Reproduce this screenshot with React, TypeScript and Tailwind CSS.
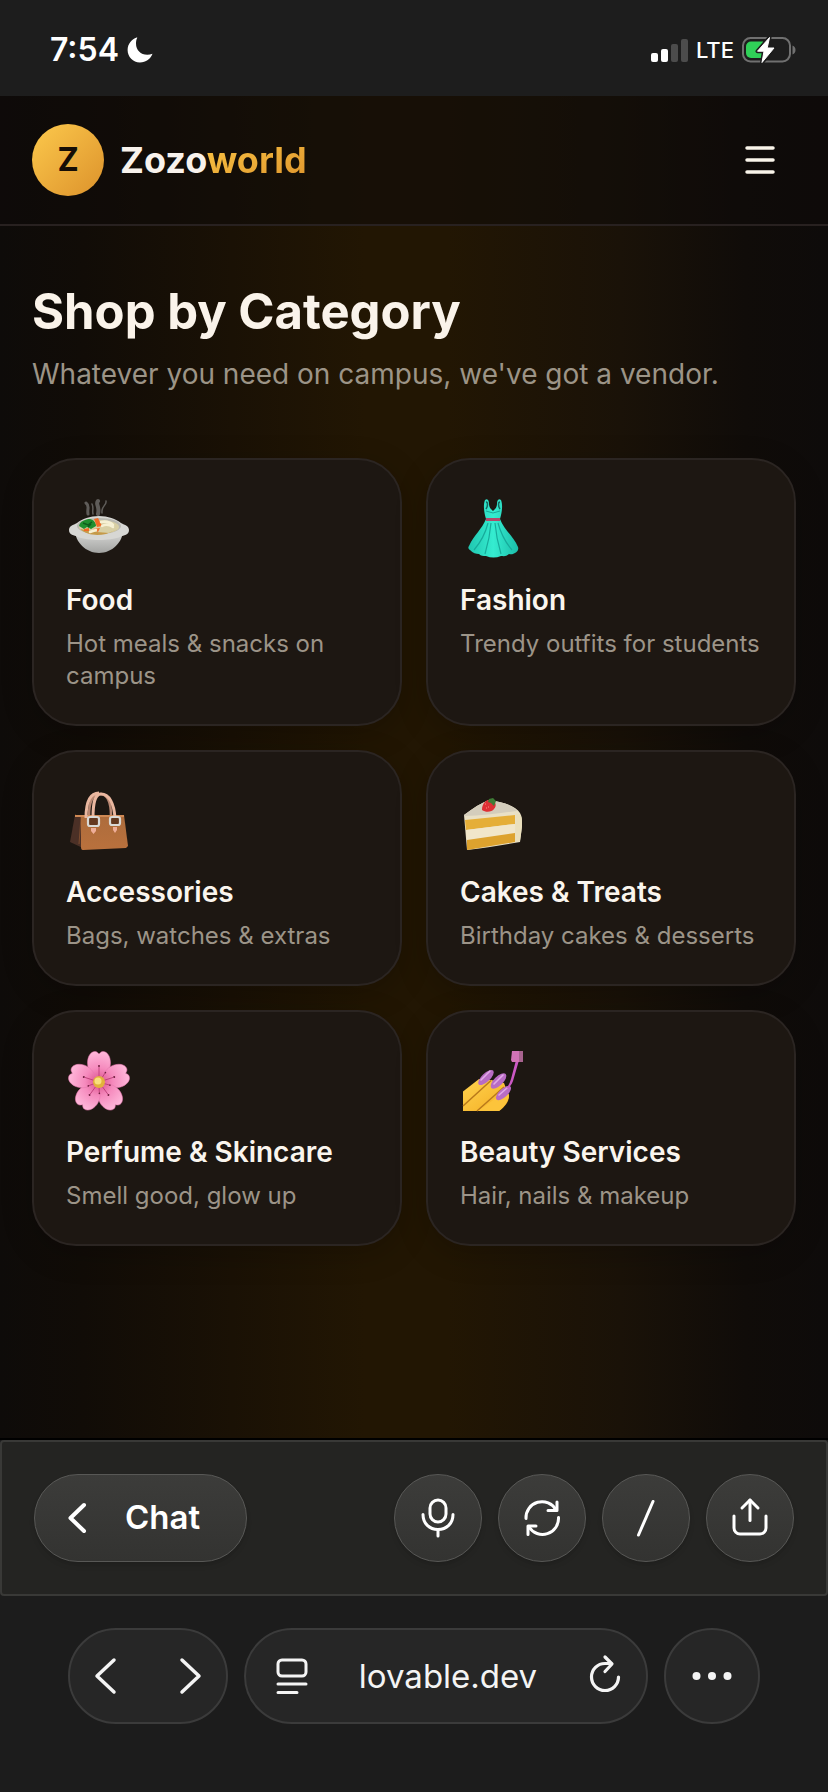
import React from 'react';

const StatusBar = () => (
    <div className="flex items-center justify-between h-24 pl-[50px] pr-8 pt-1 bg-[#1d1d1d] text-white">
        <div className="flex items-center gap-2">
            <span className="text-[32px] leading-10 font-semibold">7:54</span>
            <svg className="w-[26px] h-[26px]" viewBox="0 0 26 26" fill="#fff" aria-hidden="true">
                <path d="M9.6 0.6C5 2.2 0.6 6.8 0.6 13c0 6.800 5.400 12.400 12.300 12.400 6 0 10.800-3.400 12.600-8.600-1.700 0.700-3.400 1-5.200 1C13.600 17.800 9 13.200 9 6.600c0-2 0.200-3.900 1.200-5.700 0.200-0.400-0.200-0.500-0.600-0.300z" />
            </svg>
        </div>
        <div className="flex items-center gap-2">
            <svg className="w-[37px] h-[25px]" viewBox="0 0 37 25" aria-hidden="true">
                <rect x="0" y="15" width="7" height="9" rx="2" fill="#fff" />
                <rect x="10" y="11" width="7" height="13" rx="2" fill="#fff" />
                <rect x="20" y="6" width="7" height="18" rx="2" fill="#4c4c4c" />
                <rect x="30" y="1" width="7" height="23" rx="2" fill="#4c4c4c" />
            </svg>
            <span className="text-[22px] leading-8 font-medium">LTE</span>
            <svg className="w-[54px] h-[26px]" viewBox="0 0 54 26" aria-hidden="true">
                <rect x="1" y="1" width="47" height="23.500" rx="7.500" fill="none" stroke="#707070" strokeWidth="2" />
                <path d="M50.500 8.500c4 1.500 4 7.500 0 9z" fill="#707070" />
                <path d="M9 4.500h12v16.500H9a5 5 0 0 1-5-5v-6.500a5 5 0 0 1 5-5z" fill="#30d158" />
                <path d="M27.500 0.500 15.500 14.200h6.500L20 25.500 32 11h-6.800z" fill="#fff" stroke="#1d1d1d" strokeWidth="4" strokeLinejoin="round" />
                <path d="M27.500 0.500 15.500 14.200h6.500L20 25.500 32 11h-6.800z" fill="#fff" stroke="#fff" strokeWidth="1" strokeLinejoin="round" />
            </svg>
        </div>
    </div>
);

const FoodArt = () => (
    <>
        <defs>
            <linearGradient id="bowl" x1="0" y1="0" x2="0" y2="1">
                <stop offset="0" stopColor="#dcdcda" />
                <stop offset="1" stopColor="#a2a3a1" />
            </linearGradient>
        </defs>
        <g fill="none" stroke="#8c8b89" strokeLinecap="round" opacity="0.6">
            <path d="M20 11c4 3 1 5 2 11" strokeWidth="3" />
            <path d="M32 9c-3 3 2 5 0 13" strokeWidth="4" />
            <path d="M40 9c1 4-5 5-4 12M26 12c2 4 0 6 1 10" strokeWidth="1.500" />
        </g>
        <path d="M9 38c0 12 11 23 24 23s24-11 24-23z" fill="url(#bowl)" />
        <path d="M3 38c0-4 4-5 8-7 5-4 13-7 22-7s17 3 22 7c4 2 8 3 8 7 0 5-5 5-9 7-5 2-13 3-21 3s-16-1-21-3c-4-2-9-2-9-7z" fill="#d7d7d4" />
        <ellipse cx="33" cy="34" rx="22" ry="8" fill="#b9b8b0" />
        <ellipse cx="33" cy="35" rx="20" ry="7" fill="#d8cfa4" />
        <path d="M14 37c7 6 16 7 26 5l12-5-9 4-12-1z" fill="#c59a49" />
        <path d="M13 34c1-5 7-7 11-7 4 1 6 4 6 7l-5 3-4-2-3 2z" fill="#1f8f2f" />
        <path d="M17 31l5 2 4-3M22 35l3-3" stroke="#0d5e1c" strokeWidth="1.500" fill="none" />
        <path d="M28 27l4-1 4 8-5 1zM18 37l5-1 0 3-5 0zM27 37l7-1-2 4z" fill="#f06a25" />
        <path d="M35 30c5-1 9 0 12 3M36 34c4-2 8-1 11 1M24 40l6-2" stroke="#f6f0d3" strokeWidth="2.500" fill="none" strokeLinecap="round" />
    </>
);

const FashionArt = () => (
    <>
        <defs>
            <linearGradient id="dress" x1="0" y1="0" x2="1" y2="0">
                <stop offset="0" stopColor="#20c6b0" />
                <stop offset="0.500" stopColor="#35ecd0" />
                <stop offset="1" stopColor="#1bbda9" />
            </linearGradient>
        </defs>
        <path d="M25 8c3-2 4 1 4 4 0 4 3 6 4 7 1-1 4-3 4-7 0-3 1-6 4-4 2 5 1 12-1 19 4 11 14 18 18 28 1 3-1 5-3 6-3 2-5 1-6 1-3 3-6 2-8 2-5 2-10 2-15 0-3 0-5 0-7-2-3 0-6-1-9-4-2-1-2-3-1-4C14 43 22 37 26 27c-2-7-3-14-1-19z" fill="url(#dress)" />
        <path d="M26 10c2 0 2 4 0 7M40 10c-2 0-2 4 0 7" stroke="#13675f" strokeWidth="1.500" fill="none" />
        <path d="M28 31c-3 12-8 20-14 27M31 31c-1 12-3 21-6 31M35 31c1 12 3 21 6 31M38 31c3 11 8 20 14 27" stroke="#17ab9b" strokeWidth="1.200" fill="none" />
        <path d="M26 19l7 2 7-2" stroke="#18a697" strokeWidth="1" fill="none" />
        <path d="M26 26h14v3H26z" fill="#b3486a" />
    </>
);

const BagArt = () => (
    <>
        <defs>
            <linearGradient id="bag" x1="0" y1="0" x2="0" y2="1">
                <stop offset="0" stopColor="#ad6c3c" />
                <stop offset="1" stopColor="#b9713d" />
            </linearGradient>
        </defs>
        <path d="M23 32c0-14 4-22 11-22s11 8 11 22" fill="none" stroke="#b98772" strokeWidth="2.500" />
        <path d="M9 31h10v34l-15-7z" fill="#4b3026" />
        <path d="M9 31l6 2-2 27" stroke="#7c4b2e" strokeWidth="1" fill="none" />
        <path d="M15 31h43l4 31-2 2-43 2c-2 0-2-2-2-4z" fill="url(#bag)" />
        <path d="M9 31h49v2H9z" fill="#d08a55" />
        <path d="M20 34C20 17 25 9 33 9M27 34c0-16 2-24 8-24 8 0 13 9 14 24" fill="none" stroke="#eab79f" strokeWidth="3" />
        <rect x="22" y="33" width="11" height="9" rx="2" fill="#64391f" stroke="#d9d9d6" strokeWidth="2.200" />
        <rect x="44" y="33" width="10" height="8" rx="2" fill="#64391f" stroke="#d9d9d6" strokeWidth="2.200" />
        <path d="M25 44h5v3l-2.500 3-2.500-3zM47 43h4v3l-2 3-2-3z" fill="#efae98" />
    </>
);

const CakeArt = () => (
    <>
        <path d="M4 31c9-7 17-12 25-15 14 2 27 6 31 13 2 3 2 8 2 13l-2 16c-17 3-36 6-53 8z" fill="#e9e0c6" />
        <path d="M4 31c9-7 17-12 25-15 14 2 25 6 28 11-17 2-34 5-53 5z" fill="#d4cdbc" />
        <path d="M5 36l50-5v9L6 46z" fill="#e5ae38" />
        <path d="M6 46l49-6v10L7 56z" fill="#f1e6ca" />
        <path d="M7 56l48-7v9L7 66z" fill="#dda22e" />
        <path d="M56 30c5-1 6 3 6 8 0 7-1 12-2 19l-5 1z" fill="#eadfbc" />
        <path d="M22 26c0-6 4-11 9-10 5 1 6 6 3 9-2 3-8 4-12 1z" fill="#de2f34" />
        <path d="M29 15l4-1 3 3-2 5-3-3-3-1z" fill="#3e7c36" />
        <path d="M25 20h1M28 23h1M26 24h1" stroke="#ff8b80" strokeWidth="1" />
    </>
);

const petalAngles = [0, 72, 144, 216, 288];

const FlowerArt = () => (
    <>
        <defs>
            <radialGradient id="petal" gradientUnits="userSpaceOnUse" cx="33" cy="38" r="31">
                <stop offset="0" stopColor="#d84e88" />
                <stop offset="0.450" stopColor="#f58abd" />
                <stop offset="1" stopColor="#ffb9db" />
            </radialGradient>
        </defs>
        {petalAngles.map((angle) => (
            <g key={angle} transform={`rotate(${angle} 33 38)`}>
                <path d="M33 38c-5-5-11.500-11-11.500-19C21.500 12 25 7.500 29 7.500c2 0 3 1.500 4 2.500 1-1 2-2.500 4-2.500 4 0 7.500 4.500 7.500 11.500 0 8-6.500 14-11.500 19z" fill="url(#petal)" stroke="#e577ad" strokeWidth="0.500" />
                <path d="M33 35V23M30 34l-4-5" stroke="#b93974" strokeWidth="0.800" />
                <circle cx="33" cy="22" r="1" fill="#6f1f3e" />
                <circle cx="26" cy="29" r="0.800" fill="#6f1f3e" />
            </g>
        ))}
        <circle cx="33" cy="38" r="6" fill="#e2b23c" />
        <circle cx="32" cy="37" r="3.500" fill="#f8e07c" />
    </>
);

const NailsArt = () => (
    <>
        <defs>
            <linearGradient id="finger" x1="0" y1="0" x2="1" y2="1">
                <stop offset="0" stopColor="#ffd34f" />
                <stop offset="1" stopColor="#f4ad22" />
            </linearGradient>
        </defs>
        <path d="M3 47.500 19 35l12 1 13 3 5 13c0 5-4 11-10 15H3z" fill="url(#finger)" />
        <path d="M3 62 31 36.500M17 67l27-24" stroke="#b9791a" strokeWidth="1.500" fill="none" />
        <path d="M18 67 36 54l13-4c0 6-4 12-10 17z" fill="#fcc43b" />
        <g fill="#b86cc4">
            <ellipse cx="26" cy="33.500" rx="10" ry="4.200" transform="rotate(-44 26 33.500)" />
            <ellipse cx="38.500" cy="37" rx="10" ry="4.500" transform="rotate(-44 38.500 37)" />
            <ellipse cx="43.500" cy="49" rx="9.500" ry="4.200" transform="rotate(-43 43.500 49)" />
        </g>
        <path d="M21 36l9-9M34 40l9-9M39 51l8-7" stroke="#e2a9e8" strokeWidth="1.600" strokeLinecap="round" fill="none" />
        <path d="M55.500 18h3L53 37c-2 5-4 7-6.500 7.500 2-3 3.500-6 4.500-9.500z" fill="#cb58c4" />
        <path d="M52 7h11v11H52l-1-2z" fill="#d273b6" />
        <path d="M59 7h4v11h-4z" fill="#a8638f" />
    </>
);

interface Category {
    name: string;
    description: string;
    art: React.FC;
}

const categories: Category[] = [
    { name: 'Food', description: 'Hot meals & snacks on campus', art: FoodArt },
    { name: 'Fashion', description: 'Trendy outfits for students', art: FashionArt },
    { name: 'Accessories', description: 'Bags, watches & extras', art: BagArt },
    { name: 'Cakes & Treats', description: 'Birthday cakes & desserts', art: CakeArt },
    { name: 'Perfume & Skincare', description: 'Smell good, glow up', art: FlowerArt },
    { name: 'Beauty Services', description: 'Hair, nails & makeup', art: NailsArt },
];

const CategoryCard: React.FC<{ category: Category }> = ({ category }) => (
    <a
        href="#"
        className="block rounded-[44px] border-2 border-[#2b2522] bg-[#1d1712] p-8 shadow-[0_8px_32px_rgba(0,0,0,0.2)]"
    >
        <svg className="w-[66px] h-[72px] mb-4" viewBox="0 0 66 72" aria-hidden="true">
            <category.art />
        </svg>
        <h2 className="text-[28px] leading-10 font-semibold text-[#faf5ee]">{category.name}</h2>
        <p className="mt-2 text-2xl leading-8 text-[#9c9488]">{category.description}</p>
    </a>
);

const actions = [
    { label: 'Voice', paths: ['M24 6a8 8 0 0 1 8 8v6a8 8 0 0 1-16 0v-6a8 8 0 0 1 8-8z', 'M9 20.500c0 9 6.500 15 15 15s15-6 15-15', 'M24 36v6'] },
    { label: 'Refresh preview', paths: ['M8 24.500A16 16 0 0 1 38 16', 'M39 8v8.500h-9', 'M40.500 23.500A16 16 0 0 1 11 33', 'M10 40.500V32h8'] },
    { label: 'Routes', paths: ['M31 7.500 16.500 41'] },
    { label: 'Share', paths: ['M8 22v12a6 6 0 0 0 6 6h20a6 6 0 0 0 6-6V22', 'M24 26.500V6', 'M16 14l8-8 8 8'] },
];

export default function App() {
    return (
        <div className="min-h-screen flex flex-col bg-[#1c1c1c] font-['Inter','Liberation_Sans',sans-serif]">
            <StatusBar />

            <div className="flex-1 flex flex-col bg-[linear-gradient(to_right,#0e0b09_0%,#110c07_10%,#1a1105_28%,#221603_44%,#221603_54%,#1a1208_75%,#100c09_90%,#0e0b0a_100%)]">
                {/* Header */}
                <header className="flex items-center justify-between px-8 py-7 border-b-2 border-[#282120] bg-[#0e0b0a]/55">
                    <a href="#" className="flex items-center gap-4">
                        <span className="flex items-center justify-center w-[72px] h-[72px] rounded-full bg-linear-to-br from-[#fcc94c] to-[#dc922b] text-[32px] font-bold text-[#160e06]">
                            Z
                        </span>
                        <span className="text-4xl font-bold text-[#f8f2ec]">
                            Zozo<span className="bg-linear-to-br from-[#fac544] to-[#de942c] bg-clip-text text-transparent">world</span>
                        </span>
                    </a>
                    <button aria-label="Open menu" className="p-3">
                        <svg className="w-12 h-12" viewBox="0 0 48 48" stroke="#faf5ea" strokeWidth="3.500" strokeLinecap="round" aria-hidden="true">
                            <path d="M11 12h26M11 24h26M11 36h26" />
                        </svg>
                    </button>
                </header>

                {/* Categories */}
                <main className="flex-1 px-8 pt-14 pb-16">
                    <h1 className="text-[49px] leading-[60px] font-bold text-[#faf3ea]">Shop by Category</h1>
                    <p className="mt-3 text-[28px] leading-10 text-[#9c9487]">Whatever you need on campus, we've got a vendor.</p>
                    <div className="grid grid-cols-2 gap-6 mt-16">
                        {categories.map((category) => (
                            <CategoryCard key={category.name} category={category} />
                        ))}
                    </div>
                </main>
            </div>

            {/* Preview toolbar */}
            <div className="border-t-2 border-black">
                <div className="flex items-center justify-between p-8 rounded-sm border-2 border-[#393937] bg-[#242422]">
                    <button className="flex items-center gap-8 w-[213px] h-[88px] pl-[26px] rounded-full border border-[#585856] bg-linear-to-b from-[#3c3c3a] to-[#333331] shadow-md text-[33px] font-semibold text-white">
                        <svg className="w-8 h-8" viewBox="0 0 32 32" fill="none" stroke="currentColor" strokeWidth="4" strokeLinecap="round" strokeLinejoin="round" aria-hidden="true">
                            <path d="M23 3 9.500 16 23 29" />
                        </svg>
                        Chat
                    </button>
                    <div className="flex gap-4">
                        {actions.map((action) => (
                            <button
                                key={action.label}
                                aria-label={action.label}
                                className="flex items-center justify-center w-[88px] h-[88px] rounded-full border border-[#585856] bg-linear-to-b from-[#3c3c3a] to-[#333331] shadow-md text-white"
                            >
                                <svg className="w-12 h-12" viewBox="0 0 48 48" fill="none" stroke="currentColor" strokeWidth="3" strokeLinecap="round" strokeLinejoin="round" aria-hidden="true">
                                    {action.paths.map((d) => (
                                        <path key={d} d={d} />
                                    ))}
                                </svg>
                            </button>
                        ))}
                    </div>
                </div>
            </div>

            {/* Browser bar */}
            <nav className="flex gap-4 px-[68px] pt-8 pb-[68px] text-[#f4f4f4]">
                <div className="flex items-center justify-between w-40 h-24 px-4 rounded-full border-2 border-[#3b3b3b] bg-[#262626]">
                    <button aria-label="Back">
                        <svg className="w-10 h-10" viewBox="0 0 40 40" fill="none" stroke="currentColor" strokeWidth="3.500" strokeLinecap="round" strokeLinejoin="round" aria-hidden="true">
                            <path d="M28 4 11 20l17 16" />
                        </svg>
                    </button>
                    <button aria-label="Forward">
                        <svg className="w-10 h-10" viewBox="0 0 40 40" fill="none" stroke="currentColor" strokeWidth="3.500" strokeLinecap="round" strokeLinejoin="round" aria-hidden="true">
                            <path d="m12 4 17 16-17 16" />
                        </svg>
                    </button>
                </div>
                <div className="flex-1 flex items-center justify-between pl-6 pr-5 h-24 rounded-full border-2 border-[#3b3b3b] bg-[#262626]">
                    <button aria-label="Page settings">
                        <svg className="w-11 h-11" viewBox="0 0 44 44" fill="none" stroke="currentColor" strokeWidth="3" strokeLinecap="round" aria-hidden="true">
                            <rect x="8" y="6" width="28" height="16" rx="4" />
                            <path d="M8 30h28M8 38.500h19" />
                        </svg>
                    </button>
                    <button className="text-[33px] leading-10">lovable.dev</button>
                    <button aria-label="Reload">
                        <svg className="w-11 h-11" viewBox="0 0 44 44" fill="none" stroke="currentColor" strokeWidth="3.200" strokeLinecap="round" strokeLinejoin="round" aria-hidden="true">
                            <path d="M36.500 23A13.500 13.500 0 1 1 23 9.500h6" />
                            <path d="M23 3l7 7-7 7.500" />
                        </svg>
                    </button>
                </div>
                <button aria-label="More" className="flex items-center justify-center w-24 h-24 rounded-full border-2 border-[#3b3b3b] bg-[#262626]">
                    <svg className="w-12 h-12" viewBox="0 0 48 48" fill="currentColor" aria-hidden="true">
                        <circle cx="8.500" cy="24" r="4" />
                        <circle cx="24" cy="24" r="4" />
                        <circle cx="39.500" cy="24" r="4" />
                    </svg>
                </button>
            </nav>
        </div>
    );
}
